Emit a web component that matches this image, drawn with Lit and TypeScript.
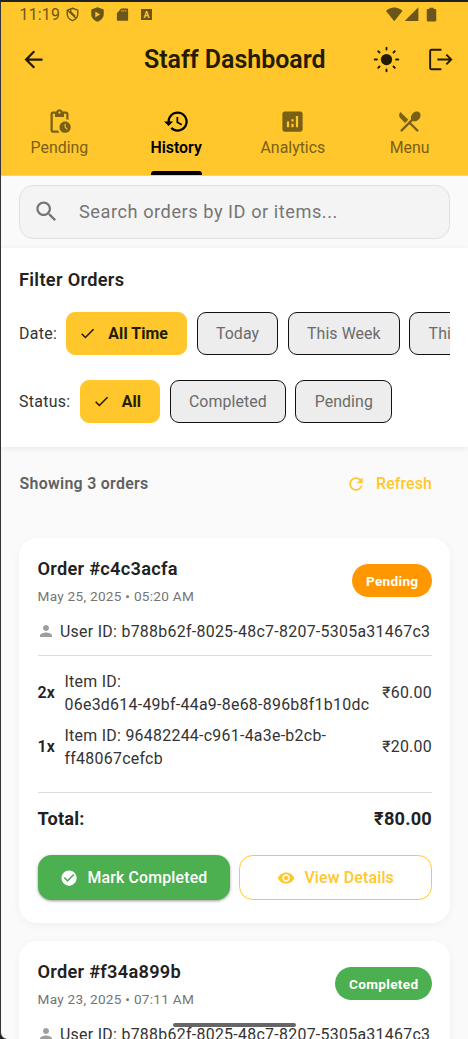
import { LitElement, html, css, svg } from "lit";
import { customElement, property } from "lit/decorators.js";

const icons: Record<string, unknown> = {
  back: svg`<path d="M20 11H7.83l5.59-5.59L12 4l-8 8 8 8 1.41-1.41L7.83 13H20z"/>`,
  sun: svg`<circle cx="12" cy="12" r="5"/><path d="M12 1.500v1.600M12 20.900v1.600M1.500 12h2M20.500 12h2M4.700 4.700l1.100 1.100M18.200 18.200l1.100 1.100M4.700 19.300l1.100-1.100M18.200 5.800l1.100-1.100" fill="none" stroke="currentColor" stroke-width="1.700" stroke-linecap="round"/>`,
  logout: svg`<path d="M12.800 3.300H4a1.200 1.200 0 0 0-1.200 1.200v15a1.200 1.200 0 0 0 1.200 1.200h8.800M9.200 12h12.200M17.200 7.700l4.300 4.300-4.300 4.300" fill="none" stroke="currentColor" stroke-width="1.700"/>`,
  pending: svg`<path d="M17 12c-2.76 0-5 2.24-5 5s2.24 5 5 5 5-2.24 5-5-2.24-5-5-5zm1.65 7.35L16.5 17.2V14h1v2.79l1.85 1.85-.7.71zM18 3h-3.18C14.4 1.84 13.3 1 12 1s-2.4.84-2.82 2H6c-1.1 0-2 .9-2 2v15c0 1.1.9 2 2 2h6.11c-.59-.57-1.07-1.25-1.42-2H6V5h2v3h8V5h2v5.08c.71.1 1.38.31 2 .6V5c0-1.1-.9-2-2-2zm-6 2c-.55 0-1-.45-1-1s.45-1 1-1 1 .45 1 1-.45 1-1 1z"/>`,
  history: svg`<path d="M13 3c-4.97 0-9 4.03-9 9H1l3.89 3.89.07.14L9 12H6c0-3.87 3.13-7 7-7s7 3.13 7 7-3.13 7-7 7c-1.93 0-3.68-.79-4.94-2.06l-1.42 1.42C8.27 19.99 10.51 21 13 21c4.97 0 9-4.03 9-9s-4.03-9-9-9zm-1 5v5l4.28 2.54.72-1.21-3.5-2.08V8H12z"/>`,
  analytics: svg`<path d="M19 3H5c-1.1 0-2 .9-2 2v14c0 1.1.9 2 2 2h14c1.1 0 2-.9 2-2V5c0-1.1-.9-2-2-2zM9 17H7v-5h2v5zm4 0h-2v-3h2v3zm0-5h-2v-2h2v2zm4 5h-2V7h2v10z"/>`,
  menu: svg`<path d="M8.1 13.34l2.83-2.83L3.91 3.5c-1.56 1.56-1.56 4.09 0 5.66l4.19 4.18zm6.78-1.81c1.53.71 3.68.21 5.27-1.38 1.91-1.91 2.28-4.65.81-6.12-1.46-1.46-4.2-1.1-6.12.81-1.59 1.59-2.09 3.74-1.38 5.27L3.7 19.87l1.41 1.41L12 14.41l6.88 6.88 1.41-1.41L13.41 13l1.47-1.47z"/>`,
  search: svg`<path d="M15.5 14h-.79l-.28-.27C15.41 12.59 16 11.11 16 9.5 16 5.91 13.09 3 9.5 3S3 5.91 3 9.5 5.91 16 9.5 16c1.61 0 3.09-.59 4.23-1.57l.27.28v.79l5 4.99L20.49 19l-4.99-5zm-6 0C7.01 14 5 11.99 5 9.5S7.01 5 9.5 5 14 7.01 14 9.5 11.99 14 9.5 14z"/>`,
  refresh: svg`<path d="M17.65 6.35C16.2 4.9 14.21 4 12 4c-4.42 0-7.99 3.58-7.99 8s3.57 8 7.99 8c3.73 0 6.84-2.55 7.73-6h-2.08c-.82 2.33-3.04 4-5.65 4-3.31 0-6-2.69-6-6s2.69-6 6-6c1.66 0 3.14.69 4.22 1.78L13 11h7V4l-2.35 2.35z"/>`,
  person: svg`<path d="M12 12c2.21 0 4-1.79 4-4s-1.79-4-4-4-4 1.79-4 4 1.79 4 4 4zm0 2c-2.67 0-8 1.34-8 4v2h16v-2c0-2.66-5.33-4-8-4z"/>`,
  done: svg`<path d="M12 2C6.48 2 2 6.48 2 12s4.48 10 10 10 10-4.48 10-10S17.52 2 12 2zm-2 15l-5-5 1.41-1.41L10 14.17l7.59-7.59L19 8l-9 9z"/>`,
  eye: svg`<path d="M12 4.5C7 4.5 2.73 7.61 1 12c1.73 4.39 6 7.5 11 7.5s9.27-3.11 11-7.5c-1.73-4.39-6-7.5-11-7.5zM12 17c-2.76 0-5-2.24-5-5s2.24-5 5-5 5 2.24 5 5-2.24 5-5 5zm0-8c-1.66 0-3 1.34-3 3s1.34 3 3 3 3-1.34 3-3-1.34-3-3-3z"/>`,
  check: svg`<path d="M3.8 12.4l5.2 5.2L20.6 6" fill="none" stroke="currentColor" stroke-width="2.3"/>`,
  shieldOff: svg`<path d="M12 2l8.400 3.100v6.200c0 5-3.500 8.900-8.400 10.600-4.900-1.700-8.400-5.600-8.400-10.600V5.100zM4.500 5.500L18.500 19M9 3.500v4l7.500 7.500" fill="none" stroke="currentColor" stroke-width="2.200"/>`,
  shieldPlay: svg`<path fill-rule="evenodd" d="M12 0.500L22 4v7.500c0 5.500-4.200 9.900-10 12-5.800-2.100-10-6.500-10-12V4zM8.500 7.300v9L16.300 11.800z"/>`,
  sdcard: svg`<path fill-rule="evenodd" d="M9.500 1H20.500c1 0 1.900.8 1.900 1.900v18.700c0 1-.9 1.900-1.900 1.900h-17c-1 0-1.900-.9-1.900-1.900V9.500zM9.800 4v2.600h2V4zm3.700 0v2.600h2V4zm3.700 0v2.600h2V4z"/>`,
  wifi: svg`<path d="M12 22L0 7.200C3 4 7.200 2 12 2s9 2 12 5.200z"/>`,
  signal: svg`<path d="M1 22.500H23V0.500z"/>`,
  battery: svg`<path d="M8.500 1h7v2.200H18c1 0 1.600.7 1.600 1.600v16.400c0 1-.7 1.800-1.600 1.800H6c-1 0-1.600-.8-1.600-1.800V4.800c0-.9.700-1.600 1.600-1.600h2.500z"/>`,
};

@customElement("ui-icon")
export class UiIcon extends LitElement {
  @property() name = "";
  static styles = css`
    :host { display: block; flex: none; width: 27px; height: 27px; }
    svg { display: block; width: 100%; height: 100%; fill: currentColor; overflow: visible; }
  `;
  render() {
    return html`<svg viewBox="0 0 24 24" aria-hidden="true">${icons[this.name]}</svg>`;
  }
}

interface Item { qty: string; lines: string[]; price: string; }
interface Order { id: string; date: string; status: string; user: string; items: Item[]; total: string; }

const USER = "b788b62f-8025-48c7-8207-5305a31467c3";
const ITEMS: Item[] = [
  { qty: "2x", lines: ["Item ID:", "06e3d614-49bf-44a9-8e68-896b8f1b10dc"], price: "₹60.00" },
  { qty: "1x", lines: ["Item ID: 96482244-c961-4a3e-b2cb-", "ff48067cefcb"], price: "₹20.00" },
];
const ORDERS: Order[] = [
  { id: "c4c3acfa", date: "May 25, 2025 • 05:20 AM", status: "Pending", user: USER, items: ITEMS, total: "₹80.00" },
  { id: "f34a899b", date: "May 23, 2025 • 07:11 AM", status: "Completed", user: USER, items: [], total: "" },
];

@customElement("order-card")
export class OrderCard extends LitElement {
  @property({ attribute: false }) order!: Order;
  static styles = css`
    :host {
      display: block; flex: none; box-sizing: border-box; padding: 18px 18px 23px 18.500px;
      border-radius: 18px; background: #fff; box-shadow: 0 2px 9px rgba(0, 0, 0, 0.045);
    }
    .head { display: flex; justify-content: space-between; align-items: center; height: 49px; }
    .id { font-size: 18.200px; line-height: 25px; font-weight: 600; letter-spacing: 0.280px; color: #212121; }
    .date { font-size: 13.600px; line-height: 20px; margin: 5px 0 -1.500px; letter-spacing: 0.280px; color: #757575; }
    .badge {
      display: flex; align-items: center; justify-content: center; height: 33px; padding: 0 13.600px;
      border-radius: 17px; 
      font-size: 13.600px; font-weight: 700; letter-spacing: 0.320px; color: #fff; background: #ff9800;
    }
    .badge.completed { background: #4caf50; }
    .user { display: flex; align-items: center; gap: 5px; margin-top: 14px; height: 24px; font-size: 15.900px; letter-spacing: 0.290px; color: #333; }
    .user ui-icon { width: 18px; height: 18px; margin-left: -0.500px; color: #9e9e9e; }
    .rule { height: 1px; background: #dcdcdc; }
    .rule.first { margin: 12px 0 15px; }
    .rule.second { margin: 21px 0 13px; }
    .items { display: flex; flex-direction: column; gap: 8.500px; padding-bottom: 0.500px; }
    .item { display: grid; grid-template-columns: 27px 1fr auto; align-items: center; font-size: 15.900px; line-height: 22.800px; letter-spacing: 0.280px; color: #333; }
    .qty { font-weight: 600; color: #212121; }
    .total { display: flex; justify-content: space-between; font-size: 18.200px; line-height: 25px; font-weight: 700; letter-spacing: 0.220px; color: #212121; }
    .actions { display: grid; grid-template-columns: 1fr 1fr; gap: 9px; margin-top: 24px; }
    .btn {
      display: flex; align-items: center; justify-content: center; gap: 9px; height: 45px; box-sizing: border-box;
      border-radius: 13.600px; font-size: 15.900px; font-weight: 500; letter-spacing: 0.160px;
    }
    .btn ui-icon { width: 18.200px; height: 18.200px; }
    .fill { background: #4caf50; color: #fff; box-shadow: 0 1px 3px rgba(0, 0, 0, 0.4); }
    .line { border: 1px solid #ffc72c; color: #ffc72c; }
  `;
  render() {
    const o = this.order;
    return html`
      <div class="head">
        <div><div class="id">Order #${o.id}</div><div class="date">${o.date}</div></div>
        <div class="badge ${o.status.toLowerCase()}">${o.status}</div>
      </div>
      <div class="user"><ui-icon name="person"></ui-icon><span>User ID: ${o.user}</span></div>
      ${o.items.length ? html`
        <div class="rule first"></div>
        <div class="items">
          ${o.items.map((i) => html`<div class="item">
            <span class="qty">${i.qty}</span>
            <div>${i.lines.map((l) => html`<div>${l}</div>`)}</div>
            <span>${i.price}</span>
          </div>`)}
        </div>
        <div class="rule second"></div>
        <div class="total"><span>Total:</span><span>${o.total}</span></div>
        <div class="actions">
          <div class="btn fill"><ui-icon name="done"></ui-icon>Mark Completed</div>
          <div class="btn line"><ui-icon name="eye"></ui-icon>View Details</div>
        </div>` : ""}
    `;
  }
}

@customElement("app-root")
export class AppRoot extends LitElement {
  static styles = css`
    :host { display: block; background: #1f1f26; font-family: Roboto, "Noto Sans", sans-serif; white-space: nowrap; }
    .screen {
      position: relative; box-sizing: border-box; width: 468px; height: 1039px; overflow: hidden;
      border-top: 2px solid #202124; border-left: 1px solid #333338; border-bottom-left-radius: 7px;
      background: #fafafa; display: flex; flex-direction: column;
    }
    .appbar { flex: none; height: 173.500px; background: #ffc72c; border-bottom: 1px solid #dccfc9; box-sizing: border-box; color: #241c00; }
    .status { display: flex; align-items: center; height: 25px; padding: 0 29.500px 0 18.500px; color: #6b5518; }
    .clock { font-size: 15.900px; letter-spacing: 0.200px; width: 45px; }
    .status ui-icon { width: 15px; height: 15px; }
    .sys { display: flex; align-items: center; gap: 10.500px; }
    .sys .sd { width: 13px; height: 15px; }
    .abox {
      display: flex; align-items: center; justify-content: center; width: 11px; height: 11px; margin-left: 2px;
      background: #6b5518; color: #ffc72c; font-size: 9px; font-weight: 700;
    }
    .radio { display: flex; align-items: center; gap: 1px; margin-left: auto; }
    .radio .wifi { width: 16.500px; height: 16.500px; }
    .radio .batt { margin-left: 4px; }
    .bar { display: grid; grid-template-columns: 124.500px 1fr auto; align-items: center; height: 65px; padding: 0 14px 0 18.500px; }
    .title { font-size: 25px; font-weight: 600; letter-spacing: -0.040px; }
    .tools { display: flex; justify-content: flex-end; gap: 27px; }
    .tabs { display: grid; grid-template-columns: repeat(4, 1fr); height: 82px; color: #7a6017; }
    .tab { display: flex; flex-direction: column; align-items: center; padding-top: 16px; box-sizing: border-box; font-size: 15.900px; letter-spacing: 0; }
    .tab ui-icon { width: 27px; height: 27px; }
    .tab.active { color: #000; font-weight: 600; letter-spacing: 0; }
    .tab .label { line-height: 20px; margin-top: 3px; }
    .mark { width: 51px; height: 3.500px; margin-top: 13px; border-radius: 3px 3px 0 0; background: #000; }
    .searchwrap { flex: none; box-sizing: border-box; height: 72.500px; padding: 9.500px 18px 9px; }
    .search {
      display: flex; align-items: center; gap: 19px; height: 54px; box-sizing: border-box; padding: 0 0 1px 13px;
      border: 1px solid #e0e0e0; border-radius: 14px; background: #f4f4f4; color: #757575;
      font-size: 18.200px; letter-spacing: 0.540px;
    }
    .search span { margin-bottom: 1px; }
    .filters { flex: none; box-sizing: border-box; height: 199px; padding: 18px 18px 0; background: #fff; box-shadow: 0 1px 6px rgba(0, 0, 0, 0.08); }
    .filters h2 { margin: 0; font-size: 18.200px; line-height: 27px; font-weight: 600; letter-spacing: 0.320px; color: #212121; }
    .row { display: flex; align-items: center; gap: 9.300px; height: 43px; overflow: hidden; margin-top: 19px; font-size: 15.900px; color: #333; }
    .row + .row { margin-top: 25px; }
    .name { letter-spacing: 0.300px; }
    .chip {
      flex: none; display: flex; align-items: center; box-sizing: border-box; height: 43px; padding: 0 18.300px;
      border: 1px solid #111; border-radius: 9px; background: #ededed; color: #6b6b6b; letter-spacing: 0.080px;
    }
    .chip.on { border-color: #ffc72c; background: #ffc72c; color: #241c00; font-weight: 700; gap: 12px; padding-left: 12px; }
    .chip ui-icon { width: 17px; height: 17px; }
    .summary { flex: none; display: flex; align-items: center; justify-content: space-between; height: 73px; padding: 0 36px 0 18.500px; font-size: 15.900px; }
    .count { font-weight: 600; letter-spacing: 0.300px; color: #616161; }
    .refresh { display: flex; align-items: center; gap: 10px; font-weight: 500; letter-spacing: 0.120px; color: #ffc72c; }
    .refresh ui-icon { width: 20px; height: 20px; }
    .list { display: flex; flex-direction: column; gap: 18px; padding: 18px 18px 0; }
    .handle { position: absolute; left: 172px; top: 1021px; width: 123px; height: 4px; border-radius: 2px; background: #666; }
  `;

  private tabs = [
    { icon: "pending", label: "Pending" },
    { icon: "history", label: "History" },
    { icon: "analytics", label: "Analytics" },
    { icon: "menu", label: "Menu" },
  ];

  private chips(labels: string[]) {
    return labels.map((l, i) => i === 0
      ? html`<div class="chip on"><ui-icon name="check"></ui-icon>${l}</div>`
      : html`<div class="chip">${l}</div>`);
  }

  render() {
    return html`<div class="screen">
      <header class="appbar">
        <div class="status">
          <span class="clock">11:19</span>
          <div class="sys">
            <ui-icon name="shieldOff"></ui-icon>
            <ui-icon name="shieldPlay"></ui-icon>
            <ui-icon class="sd" name="sdcard"></ui-icon>
            <span class="abox">A</span>
          </div>
          <div class="radio">
            <ui-icon class="wifi" name="wifi"></ui-icon>
            <ui-icon name="signal"></ui-icon>
            <ui-icon class="batt" name="battery"></ui-icon>
          </div>
        </div>
        <div class="bar">
          <ui-icon name="back"></ui-icon>
          <span class="title">Staff Dashboard</span>
          <div class="tools"><ui-icon name="sun"></ui-icon><ui-icon name="logout"></ui-icon></div>
        </div>
        <nav class="tabs">
          ${this.tabs.map((t) => html`<div class="tab ${t.label === "History" ? "active" : ""}">
            <ui-icon name=${t.icon}></ui-icon><span class="label">${t.label}</span>
            ${t.label === "History" ? html`<div class="mark"></div>` : ""}
          </div>`)}
        </nav>
      </header>
      <div class="searchwrap"><div class="search"><ui-icon name="search"></ui-icon><span>Search orders by ID or items...</span></div></div>
      <section class="filters">
        <h2>Filter Orders</h2>
        <div class="row"><span class="name">Date:</span>${this.chips(["All Time", "Today", "This Week", "This Month"])}</div>
        <div class="row"><span class="name">Status:</span>${this.chips(["All", "Completed", "Pending"])}</div>
      </section>
      <div class="summary">
        <span class="count">Showing 3 orders</span>
        <span class="refresh"><ui-icon name="refresh"></ui-icon>Refresh</span>
      </div>
      <div class="list">${ORDERS.map((o) => html`<order-card .order=${o}></order-card>`)}</div>
      <div class="handle"></div>
    </div>`;
  }
}
